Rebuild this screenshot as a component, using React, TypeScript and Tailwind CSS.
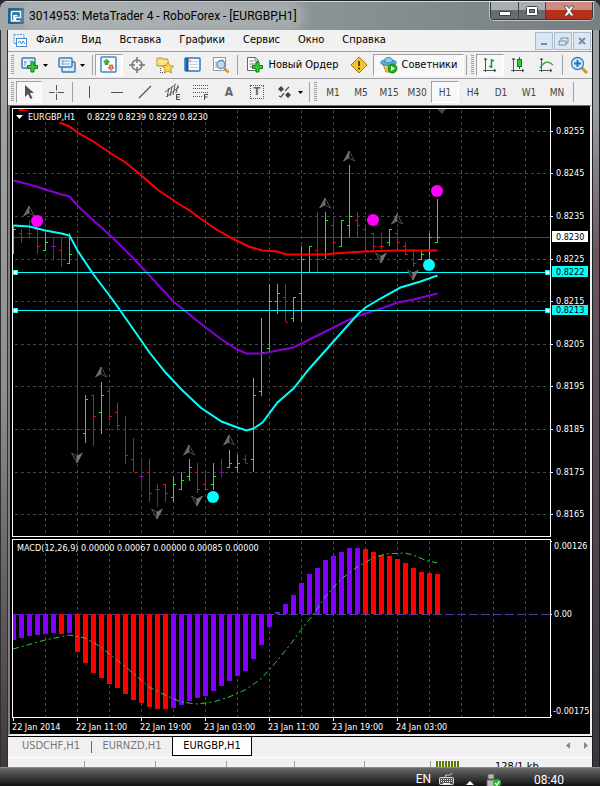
import { useState } from 'react';
import type { ReactNode } from 'react';

type Bar = [x: number, high: number, low: number, open: number, close: number, color: 'g' | 'r' | 'p'];

const BAR_COLORS = { g: '#00ff00', r: '#ff0000', p: '#8a00d4' };

const bars: Bar[] = [
  [13, 225, 254, 0, 229, 'g'], [21, 229, 243, 233, 237, 'r'], [29, 220, 237, 233, 233, 'p'],
  [37, 229, 254, 229, 246, 'r'], [45, 233, 251, 250, 242, 'g'], [53, 237, 259, 246, 246, 'p'],
  [61, 237, 267, 250, 259, 'r'], [69, 233, 263, 263, 254, 'g'], [77, 237, 451, 259, 429, 'r'],
  [85, 395, 443, 433, 399, 'g'], [93, 395, 446, 395, 416, 'r'], [101, 382, 434, 412, 395, 'g'],
  [109, 386, 421, 391, 416, 'r'], [117, 403, 430, 412, 425, 'r'], [125, 416, 464, 429, 455, 'r'],
  [133, 438, 472, 459, 472, 'r'], [141, 459, 490, 476, 476, 'p'], [149, 459, 502, 472, 493, 'r'],
  [157, 484, 507, 489, 489, 'p'], [165, 484, 502, 484, 493, 'r'], [173, 476, 502, 497, 484, 'g'],
  [181, 472, 490, 489, 480, 'g'], [189, 459, 481, 476, 467, 'g'], [197, 463, 493, 472, 489, 'r'],
  [205, 472, 490, 484, 489, 'r'], [213, 463, 490, 484, 476, 'g'], [221, 459, 477, 472, 472, 'p'],
  [229, 450, 467, 467, 463, 'g'], [237, 455, 472, 467, 463, 'g'], [245, 455, 463, 459, 463, 'r'],
  [253, 378, 472, 459, 395, 'g'], [261, 318, 396, 391, 352, 'g'], [269, 284, 352, 348, 301, 'g'],
  [277, 284, 314, 301, 293, 'g'], [285, 284, 322, 297, 322, 'r'], [293, 297, 322, 318, 297, 'g'],
  [301, 246, 322, 293, 259, 'g'], [309, 246, 272, 0, 246, 'g'], [317, 212, 272, 250, 259, 'r'],
  [325, 212, 259, 254, 220, 'g'], [333, 216, 254, 225, 242, 'r'], [341, 220, 246, 246, 220, 'g'],
  [349, 165, 237, 225, 216, 'g'], [357, 212, 237, 220, 225, 'r'], [365, 225, 250, 229, 250, 'r'],
  [373, 233, 250, 233, 246, 'r'], [381, 233, 250, 246, 246, 'r'], [389, 229, 246, 242, 229, 'g'],
  [397, 229, 248, 233, 242, 'r'], [405, 242, 255, 246, 254, 'r'], [413, 250, 267, 259, 263, 'r'],
  [421, 250, 259, 259, 254, 'g'], [429, 233, 264, 250, 237, 'g'], [437, 199, 242, 242, 237, 'g'],
];

// one value per bar, the end of the column that is away from the zero line
const ZERO_Y = 614;
const macd = [
  640, 638, 636, 635, 634, 633, 634, 633, 652, 663, 673, 678, 684, 688, 694, 700, 703, 707, 709, 709,
  708, 705, 701, 698, 696, 691, 686, 681, 676, 671, 659, 645, 627, 612, 604, 595, 583, 574, 568, 560,
  556, 552, 548, 548, 549, 552, 555, 556, 559, 563, 568, 572, 573, 574,
];

const isRedColumn = (i: number) => i === 6 || (i >= 8 && i <= 19) || i >= 44;

const redLine = '59,122 69,126 77,132 93,141 109,152 125,162 141,175 157,189 173,200 189,210 200,218 216,229 232,238 248,246 262,250 277,251 286,254 325,254 333,253 365,251 397,250 437,250';
const purpleLine = '13,180 29,184 45,189 61,194 69,196 77,205 93,220 101,227 117,242 133,258 149,275 173,301 200,323 221,339 237,349 246,353 262,353 277,350 293,347 309,339 333,327 349,319 365,313 381,308 397,302 413,299 437,293';
const cyanLine = '13,225 29,226 45,230 61,233 69,235 77,250 93,274 112,299 133,329 149,352 165,372 181,389 200,407 221,421 237,427 246,430 253,428 262,422 277,402 293,388 309,368 325,350 341,332 357,314 365,307 380,298 400,287 420,281 437,275';
const signalLine = '13,649 45,640 69,635 85,638 101,647 117,660 133,673 149,687 165,695 181,702 197,704 213,702 229,697 245,690 261,679 277,661 293,641 301,630 313,615 325,597 340,580 357,567 373,558 385,554 405,553 413,555 425,560 437,563';

const gridX = [45, 77, 109, 141, 173, 205, 237, 269, 301, 333, 365, 397, 429, 461, 493, 525];

const prices = [
  { y: 131, label: '0.8255' },
  { y: 173, label: '0.8245' },
  { y: 216, label: '0.8235' },
  { y: 259, label: '0.8225' },
  { y: 301, label: '0.8215' },
  { y: 344, label: '0.8205' },
  { y: 386, label: '0.8195' },
  { y: 429, label: '0.8185' },
  { y: 472, label: '0.8175' },
  { y: 514, label: '0.8165' },
];

const dates = ['22 Jan 2014', '22 Jan 11:00', '22 Jan 19:00', '23 Jan 03:00', '23 Jan 11:00', '23 Jan 19:00', '24 Jan 03:00'];

const fractalsUp = [[29, 211], [101, 372], [189, 450], [229, 440], [325, 203], [349, 156], [397, 219]];
const fractalsDown = [[77, 458], [157, 514], [197, 501], [381, 258], [413, 275]];

const Fractal = ({ x, y, down }: { x: number; y: number; down?: boolean }) => (
  <g transform={`translate(${x} ${y}) scale(1 ${down ? -1 : 1})`}>
    <path d="M0 -5 L-5.500 5 L0 2 Z" fill={down ? '#111' : '#666'} stroke="#76808a" strokeWidth="0.6" />
    <path d="M0 -5 L5.500 5 L0 2 Z" fill={down ? '#777' : '#000'} stroke="#8f7b6a" strokeWidth="0.6" />
  </g>
);

const Chart = () => (
  <svg viewBox="10 106 580 628" className="block w-full h-auto bg-black font-['DejaVu_Sans_Condensed','DejaVu_Sans',sans-serif]" role="img" aria-label="EURGBP,H1">
    {/* grid */}
    <g transform="translate(.5 .5)" strokeDasharray="3 3" shapeRendering="crispEdges">
      {gridX.map((x) => <path key={x} d={`M${x} 109V536`} stroke="#3c474f" />)}
      {gridX.map((x) => <path key={x} d={`M${x} 540V717`} stroke="#484848" />)}
      {prices.map((p) => <path key={p.y} d={`M14 ${p.y}H550`} stroke="#3c474f" />)}
    </g>
    <path d="M13 237.500H550" stroke="#3f4a53" />
    <path d="M437 109h9l-4 5z" fill="#3c474f" />

    {/* MACD columns */}
    <g shapeRendering="crispEdges">
      <path d="M13 614.500H550" stroke="#4a3fa0" strokeDasharray="9 3" />
      {macd.map((v, i) => (
        <rect
          key={i}
          x={i === 0 ? 13 : 11 + i * 8}
          y={Math.min(v, ZERO_Y)}
          width={i === 0 ? 3 : 5}
          height={Math.abs(v - ZERO_Y)}
          fill={isRedColumn(i) ? '#ff0000' : '#7f00ff'}
        />
      ))}
    </g>
    <polyline points={signalLine} fill="none" stroke="#32cd32" strokeDasharray="6 3 2 3" />

    {/* price bars */}
    <g transform="translate(.5 0)" shapeRendering="crispEdges">
      {bars.map(([x, high, low, open, close, c]) => (
        <path
          key={x}
          stroke={BAR_COLORS[c]}
          fill="none"
          d={`M${x} ${high}V${low}` + (open ? `M${x} ${open + 0.5}h-2.500` : '') + `M${x} ${close + 0.5}h2.500`}
        />
      ))}
    </g>

    {/* moving averages */}
    <g fill="none" strokeWidth="2" transform="translate(.5 .5)">
      <path d="M18 109L28 111" stroke="#ff0000" />
      <polyline points={redLine} stroke="#ff0000" />
      <polyline points={purpleLine} stroke="#8a00d4" />
      <polyline points={cyanLine} stroke="#00ffff" />
    </g>

    {[272, 310].map((y) => (
      <g key={y} shapeRendering="crispEdges">
        <path d={`M13 ${y + 0.5}H550`} stroke="#00ffff" />
        <rect x="13.500" y={y - 1.5} width="4" height="4" fill="#fff" stroke="#00ffff" />
        <rect x="545.500" y={y - 1.5} width="4" height="4" fill="#fff" stroke="#00ffff" />
      </g>
    ))}

    {fractalsUp.map(([x, y]) => <Fractal key={x} x={x} y={y} />)}
    {fractalsDown.map(([x, y]) => <Fractal key={x} x={x} y={y} down />)}

    <g fill="#ff00ff">
      <circle cx="37" cy="221" r="6" />
      <circle cx="373" cy="220" r="6" />
      <circle cx="437" cy="191" r="6" />
    </g>
    <g fill="#00ffff">
      <circle cx="429" cy="265" r="6" />
      <circle cx="213" cy="497" r="6" />
    </g>

    {/* frames and axis ticks */}
    <g fill="none" stroke="#fff" shapeRendering="crispEdges">
      <path d="M12.500 108.500H550.500V536.500H12.500Z" />
      <path d="M12.500 539.500H550.500V717.500H12.500Z" />
      {prices.map((p) => <path key={p.y} d={`M550 ${p.y + 0.5}h3`} />)}
      {[541, 614, 715].map((y) => <path key={y} d={`M550 ${y + 0.5}h2`} />)}
      {dates.map((d, i) => <path key={d} d={`M${13.5 + i * 64} 717v4`} />)}
    </g>

    <g fill="#fff" fontSize="9">
      <rect x="14" y="111" width="196" height="11" fill="#000" />
      <path d="M16 115h7l-3.500 4z" />
      <text x="28" y="120">EURGBP,H1</text>
      <text x="87" y="120">0.8229 0.8239 0.8229 0.8230</text>
      <text x="17" y="551">MACD(12,26,9) 0.00000 0.00067 0.00000 0.00085 0.00000</text>

      {prices.map((p) => <text key={p.y} x="556" y={p.y + 3}>{p.label}</text>)}
      <text x="554" y="549">0.00126</text>
      <text x="554" y="617">0.00</text>
      <text x="553" y="714">-0.00175</text>
      {dates.map((d, i) => <text key={d} x={12 + i * 64} y="730">{d}</text>)}

      <rect x="552" y="231" width="36" height="11" />
      <rect x="552" y="266" width="36" height="11" fill="#00ffff" />
      <rect x="552" y="305" width="36" height="10" fill="#00ffff" />
      <g fill="#000">
        <text x="556" y="240">0.8230</text>
        <text x="556" y="275">0.8222</text>
        <text x="556" y="313">0.8213</text>
      </g>
    </g>
  </svg>
);

const Icon = ({ children, w = 18, h = 18 }: { children: ReactNode; w?: number; h?: number }) => (
  <svg width={w} height={h} viewBox={`0 0 ${w} ${h}`} className="shrink-0" aria-hidden="true">{children}</svg>
);

const Caret = () => (
  <svg width="5" height="3" viewBox="0 0 5 3" className="shrink-0" aria-hidden="true"><path d="M0 0h5L2.500 3z" fill="#000" /></svg>
);

const Grip = () => (
  <div className="mx-[2px] h-5 w-[3px] shrink-0 bg-[repeating-linear-gradient(#a0a0a0_0_1px,transparent_1px_2px)]" />
);

const Separator = () => <div className="mx-[2px] h-5 w-px shrink-0 bg-[#a0a0a0]" />;

const ToolButton = ({ label, pressed, className = 'w-7', children }: { label: string; pressed?: boolean; className?: string; children: ReactNode }) => (
  <button
    aria-label={label}
    className={
      'flex h-[22px] shrink-0 items-center justify-center gap-1 border ' + className +
      (pressed ? ' border-t-[#a0a0a0] border-l-[#a0a0a0] border-r-white border-b-white bg-[#f8f8f8]' : ' border-transparent')
    }
  >
    {children}
  </button>
);

const PLUS = 'M10 6h3v3.500h3.500v3h-3.500V16h-3v-3.500H6.500v-3H10z';

const StandardToolbar = () => (
  <div className="flex h-[27px] items-center overflow-hidden border-b border-[#a0a0a0] bg-[#f0f0f0] pl-px">
    <Grip />
    <ToolButton label="Новый график" className="w-[37px]">
      <Icon>
        <rect x="1" y="2" width="13" height="10" rx="1" fill="#eaf4fc" stroke="#3c7ab4" strokeWidth="1.500" />
        <path d="M4 5v5M3 6h3M8 5h4" stroke="#7a9dbd" />
        <path d={PLUS} fill="#2fd02f" stroke="#0d7d12" />
      </Icon>
      <Caret />
    </ToolButton>
    <ToolButton label="Профили" className="w-[37px]">
      <Icon>
        <rect x="4" y="6" width="13" height="10" rx="1" fill="#dcebf8" stroke="#3c7ab4" strokeWidth="1.500" />
        <rect x="1" y="2" width="13" height="9" rx="1" fill="#eaf4fc" stroke="#3c7ab4" strokeWidth="1.500" />
        <path d="M3 5h9M3 8h9M5 4v5" stroke="#7aa6cd" />
      </Icon>
      <Caret />
    </ToolButton>
    <Separator />
    <ToolButton label="Обзор рынка" pressed>
      <Icon>
        <rect x="1" y="1" width="15" height="15" rx="1" fill="#fff" stroke="#3f86c8" strokeWidth="1.500" />
        <path d="M6.500 3l3 3H8v2.500H5V6H3.500z" fill="#2fc42f" stroke="#128a14" strokeWidth=".7" />
        <path d="M11 14.500l-3-3h1.500V9h3v2.500H14z" fill="#ff8a5c" stroke="#c73b12" strokeWidth=".7" />
      </Icon>
    </ToolButton>
    <ToolButton label="Окно данных">
      <Icon>
        <circle cx="9" cy="9" r="5" fill="none" stroke="#777" strokeWidth="1.500" />
        <path d="M9 1v6M9 11v6M1 9h6M11 9h6" stroke="#777" strokeWidth="1.500" />
      </Icon>
    </ToolButton>
    <ToolButton label="Навигатор">
      <Icon w={20}>
        <path d="M2 3q0-1 1-1h4l1 1h4q1 0 1 1v6H2z" fill="#f7de7a" stroke="#b8912a" />
        <path d="M2 6h11" stroke="#fff3b8" />
        <path d="M5.500 12v5M7 16.500h3" stroke="#555" strokeDasharray="1 1" />
        <path d="M13 6l1.800 3.700 4 .5-3 2.800.8 4-3.600-2-3.600 2 .8-4-3-2.800 4-.5z" fill="#fbd84c" stroke="#b5831d" strokeWidth=".8" />
      </Icon>
    </ToolButton>
    <ToolButton label="Терминал">
      <Icon>
        <rect x="1" y="2" width="15" height="13" rx="1" fill="#f5faff" stroke="#2f76b8" strokeWidth="1.500" />
        <path d="M3 2v13" stroke="#1f5e9e" strokeWidth="3" />
        <path d="M6 5.500h8M6 8.500h8M6 11.500h8" stroke="#c3d5e4" />
        <path d="M5 5h2" stroke="#e03030" />
      </Icon>
    </ToolButton>
    <ToolButton label="Тестер стратегий">
      <Icon>
        <rect x="1.500" y="1.500" width="12" height="13" fill="#fff" stroke="#999" />
        <path d="M4 12V5M7 13V8M11 7V3" stroke="#aaa" />
        <path d="M12 12l4.500 4.500" stroke="#d79a2b" strokeWidth="2.500" />
        <circle cx="9" cy="8.500" r="4" fill="#b9dcf5" stroke="#5d8fbd" strokeWidth="1.300" />
      </Icon>
    </ToolButton>
    <Separator />
    <ToolButton label="Новый Ордер" className="w-[105px]">
      <Icon>
        <path d="M1.500 1.500h8l3 3v10h-11z" fill="#fff" stroke="#666" />
        <path d="M9 1.500v3.500h3.500M3.500 5h4M3.500 8h6M3.500 11h4" fill="none" stroke="#777" />
        <path d={PLUS} fill="#2fd02f" stroke="#0d7d12" />
      </Icon>
      <span className="whitespace-nowrap">Новый Ордер</span>
    </ToolButton>
    <ToolButton label="Предупреждение">
      <Icon>
        <path d="M9 1l8 8-8 8-8-8z" fill="#f2c531" stroke="#a37a17" />
        <path d="M9 5v5M9 11.500v2" stroke="#5b4300" strokeWidth="2" />
      </Icon>
    </ToolButton>
    <ToolButton label="Советники" pressed className="w-[91px]">
      <Icon>
        <path d="M3 8l3 8h6l3-8z" fill="#f5d25a" stroke="#b88c22" />
        <ellipse cx="8.500" cy="6.500" rx="8" ry="3" fill="#5caee0" stroke="#2d76a8" strokeWidth=".8" />
        <path d="M4.500 6q0-5 4-4.500Q12.500 1 12.500 6q-4 2-8 0z" fill="#8bcbee" stroke="#2d76a8" strokeWidth=".8" />
        <circle cx="12.500" cy="12.500" r="4.500" fill="#21ad28" stroke="#0d7a12" strokeWidth=".8" />
        <path d="M11 10l4 2.500-4 2.500z" fill="#fff" />
      </Icon>
      <span>Советники</span>
    </ToolButton>
    <Separator />
    <Grip />
    <ToolButton label="Бары" pressed>
      <Icon>
        <path d="M4.500 2v14M2 14.500h13M3 4l1.500-2L6 4M13 13l2 1.500-2 1.500" fill="none" stroke="#555" />
        <path d="M10.500 3v9M10.500 4.500h2.500M8 10.500h2.500" stroke="#179a1c" strokeWidth="1.500" />
      </Icon>
    </ToolButton>
    <ToolButton label="Японские свечи">
      <Icon>
        <path d="M4.500 2v14M2 14.500h13M3 4l1.500-2L6 4M13 13l2 1.500-2 1.500" fill="none" stroke="#555" />
        <path d="M10.500 1v12" stroke="#0d7d12" />
        <rect x="8.500" y="3.500" width="4" height="7" fill="#2fd02f" stroke="#0d7d12" />
      </Icon>
    </ToolButton>
    <ToolButton label="Линия">
      <Icon>
        <path d="M4.500 2v14M2 14.500h13M3 4l1.500-2L6 4M13 13l2 1.500-2 1.500" fill="none" stroke="#555" />
        <path d="M3 12q6-10 13-3" fill="none" stroke="#3d9c40" strokeWidth="1.300" />
      </Icon>
    </ToolButton>
    <Separator />
    <ToolButton label="Увеличить">
      <Icon>
        <path d="M11 11l6 6" stroke="#c9982c" strokeWidth="3" />
        <circle cx="7.500" cy="7.500" r="6" fill="#cfe8fb" stroke="#3a7fc1" strokeWidth="1.300" />
        <path d="M7.500 4v7M4 7.500h7" stroke="#2d6fb3" strokeWidth="2" />
      </Icon>
    </ToolButton>
  </div>
);

const timeframes = ['M1', 'M5', 'M15', 'M30', 'H1', 'H4', 'D1', 'W1', 'MN'];

const DrawingToolbar = () => {
  const [frame, setFrame] = useState('H1');

  return (
    <div className="flex h-[26px] items-center overflow-hidden bg-[#f0f0f0] pl-px">
      <Grip />
      <ToolButton label="Курсор" pressed className="w-[26px]">
        <Icon><path d="M5 2v12l3-3 2.500 5 2-1-2.500-5h4z" fill="#555" /></Icon>
      </ToolButton>
      <ToolButton label="Перекрестие">
        <Icon><path d="M9.500 2v5.500M9.500 11v6M2 9.500h5.500M11 9.500h6" stroke="#555" /><path d="M9 9h1v1H9z" fill="#555" /></Icon>
      </ToolButton>
      <Separator />
      <ToolButton label="Вертикальная линия">
        <Icon><path d="M9.500 3v12" stroke="#555" /></Icon>
      </ToolButton>
      <ToolButton label="Горизонтальная линия">
        <Icon><path d="M3 9.500h12" stroke="#555" /></Icon>
      </ToolButton>
      <ToolButton label="Трендовая линия">
        <Icon><path d="M3 15L15 3" stroke="#555" strokeWidth="1.200" /></Icon>
      </ToolButton>
      <ToolButton label="Канал">
        <Icon>
          <path d="M1 9L12 1M2 14L15 4M5 5L3 14M8 4L6 13M11 3L9 12M14 2l-2 8" stroke="#555" fill="none" />
          <path d="M16 11.500h-3.500v5H16M12.500 14H15.500" stroke="#444" fill="none" />
        </Icon>
      </ToolButton>
      <ToolButton label="Фибоначчи">
        <Icon>
          <path d="M1 2.500h15M1 5.500h15M1 9.500h15M1 13.500h9" stroke="#555" strokeDasharray="1 1" />
          <path d="M12.500 17v-5.500H16M12.500 14H15.500" stroke="#444" fill="none" />
        </Icon>
      </ToolButton>
      <ToolButton label="Текст">
        <span className="text-[12px] font-bold text-[#666]">A</span>
      </ToolButton>
      <ToolButton label="Метка">
        <span className="flex h-[14px] w-[14px] items-center justify-center border border-dotted border-[#555] text-[11px] font-bold text-[#666]">T</span>
      </ToolButton>
      <ToolButton label="Стрелки" className="w-9">
        <Icon>
          <path d="M5 3l3 3-3 3-3-3zM12 9l3 3-3 3-3-3z" fill="#444" />
          <path d="M3 13l2 1 3-4M9 8l4-4" stroke="#555" strokeWidth="1.300" fill="none" />
        </Icon>
        <Caret />
      </ToolButton>
      <Separator />
      <Grip />
      {timeframes.map((t) => (
        <button
          key={t}
          onClick={() => setFrame(t)}
          className={
            'h-[22px] w-7 shrink-0 border text-[10px] text-[#444] ' +
            (t === frame ? 'border-t-[#a0a0a0] border-l-[#a0a0a0] border-r-white border-b-white bg-[#f8f8f8]' : 'border-transparent')
          }
        >
          {t}
        </button>
      ))}
      <Separator />
    </div>
  );
};

const TitleBar = () => (
  <header className="flex h-[29px] items-start justify-between border-t border-[#cfd5d8] pl-2 pr-[7px]">
    <div className="flex h-7 items-center gap-[5px]">
      <svg width="16" height="16" viewBox="0 0 16 16" aria-hidden="true">
        <rect width="16" height="16" rx="1" fill="#1e6394" />
        <path d="M3.500 3.500h9v6h-5v3.500h5M3.500 3.500V13H6V7.500h3.500" fill="none" stroke="#fff" strokeWidth="1.500" />
      </svg>
      <h1 className="whitespace-nowrap rounded-full bg-[#b5babd]/60 font-[Roboto,'Noto_Sans',sans-serif] text-[12px] leading-4 text-black shadow-[0_0_8px_8px_rgba(181,186,189,0.6)]">
        3014953: MetaTrader 4 - RoboForex - [EURGBP,H1]
      </h1>
    </div>
    <div className="flex h-[18px] overflow-hidden rounded-b border border-t-0 border-[#33383b] shadow-[0_0_0_1px_rgba(255,255,255,0.5)]">
      <button aria-label="Свернуть" className="flex w-7 items-center justify-center border-r border-[#444] bg-linear-to-b from-[#a9aeb1] from-50% to-[#666c70] to-50%">
        <Icon w={12} h={12}><rect x=".5" y="6.500" width="11" height="4" fill="#fff" stroke="#444" /></Icon>
      </button>
      <button aria-label="Развернуть" className="flex w-[27px] items-center justify-center border-r border-[#444] bg-linear-to-b from-[#a9aeb1] from-50% to-[#666c70] to-50%">
        <Icon w={12} h={12}><rect x=".5" y="1.500" width="11" height="9" rx="1" fill="#fff" stroke="#444" /><rect x="3.500" y="4.500" width="5" height="3" fill="#777" stroke="#444" /></Icon>
      </button>
      <button aria-label="Закрыть" className="flex w-[46px] items-center justify-center bg-linear-to-b from-[#d08a80] from-50% to-[#b5301a] to-50%">
        <Icon w={12} h={12}><path d="M1 1h3l2 2.500L8 1h3L7.700 6l3.300 5H8L6 8.500 4 11H1l3.300-5z" fill="#fff" stroke="#444" strokeWidth=".8" /></Icon>
      </button>
    </div>
  </header>
);

const menus = ['Файл', 'Вид', 'Вставка', 'Графики', 'Сервис', 'Окно', 'Справка'];

const MenuBar = () => (
  <nav className="flex h-[22px] items-center border-b border-[#a0a0a0] bg-[#f1f1f1] pl-[5px] pr-px">
    <Icon w={14} h={16}>
      <rect x="1" y="1.500" width="10" height="9" fill="#e6f1fb" stroke="#5f9bd0" strokeDasharray="2 1" />
      <rect x="3.500" y="5.500" width="10" height="8" fill="#fff" stroke="#4a8ccb" />
      <path d="M5 10l2-2 1.500 3L10 8l2 3" fill="none" stroke="#4a8ccb" />
    </Icon>
    <div className="flex flex-1 gap-[18px] pl-[9px]">
      {menus.map((m) => <button key={m}>{m}</button>)}
    </div>
    <div className="flex gap-px">
      {['M4 10h6', 'M5 6V4h7v5h-2M3 7h7v4H3z', 'M4 4l6 6M10 4l-6 6'].map((d, i) => (
        <button key={d} aria-label={['Свернуть окно', 'Восстановить окно', 'Закрыть окно'][i]} className="flex h-[18px] w-[18px] items-center justify-center border border-[#a9bccd] bg-[#dbe8f3]">
          <Icon w={14} h={14}><path d={d} fill="none" stroke="#7b8b99" strokeWidth={i === 1 ? 1 : 2} /></Icon>
        </button>
      ))}
    </div>
  </nav>
);

const ChartTabs = () => {
  const [tab, setTab] = useState('EURGBP,H1');

  return (
    <div className="flex h-[21px] items-start border-t border-black bg-[#f0f0f0] pl-[3px] pr-1">
      {['USDCHF,H1', 'EURNZD,H1', 'EURGBP,H1'].map((t, i) => (
        <div key={t} className="flex items-center">
          {i === 1 && <div className="h-3 w-px bg-[#666]" />}
          <button
            onClick={() => setTab(t)}
            className={'h-[19px] w-20 ' + (t === tab ? 'border border-t-0 border-black bg-white text-black' : 'text-[#777]')}
          >
            {t}
          </button>
        </div>
      ))}
      <div className="ml-auto flex h-[18px] items-center gap-3">
        <button aria-label="Назад"><Icon w={5} h={8}><path d="M4 0v7L0 3.500z" fill="#888" /></Icon></button>
        <button aria-label="Вперед"><Icon w={5} h={8}><path d="M1 0v7l4-3.500z" fill="#888" /></Icon></button>
      </div>
    </div>
  );
};

// the bar is cut off by the taskbar, only the top of its text shows
const StatusBar = () => (
  <div className="flex h-[10px] items-start overflow-hidden border-t border-white bg-[#f0f0f0] pt-[3px]">
    <div className="h-2 w-[77px] border-r border-[#a0a0a0]" />
    <div className="h-2 w-[71px] border-r border-[#a0a0a0]" />
    <div className="h-2 w-[71px] border-r border-[#a0a0a0]" />
    <div className="h-2 w-[68px] border-r border-[#a0a0a0]" />
    <div className="h-2 w-[70px] border-r border-[#a0a0a0]" />
    <div className="h-2 w-[66px] border-r border-[#a0a0a0]" />
    <div className="ml-[5px] h-2 w-[23px] bg-[repeating-linear-gradient(90deg,#5a7a00_0_2px,transparent_2px_3px)]" />
    <span className="ml-9 whitespace-nowrap leading-3 text-black">128/1 kb</span>
  </div>
);

const Taskbar = () => (
  <footer className="flex h-[19px] items-start justify-end overflow-hidden border-t border-[#8a8a8a] bg-linear-to-b from-[#6b6b6b] to-[#141414] font-[Roboto,'Noto_Sans',sans-serif] text-[12px] text-white">
    <span className="mt-[5px] leading-3">EN</span>
    <span className="ml-2 mt-[5px]">
      <Icon w={15} h={13}>
        <path d="M6 4Q6 1 9 2t4-2" fill="none" stroke="#ccc" />
        <rect x=".5" y="4.500" width="14" height="7" rx="1" fill="#555" stroke="#ddd" />
        <path d="M2 6.500h11M2 8.500h11" stroke="#eee" strokeDasharray="1 1" />
        <path d="M4 10.500h7" stroke="#eee" />
      </Icon>
    </span>
    <button aria-label="Скрытые значки" className="ml-3 mt-3"><Icon w={8} h={5}><path d="M0 5l4-4 4 4z" fill="#fff" /></Icon></button>
    <span className="ml-3 mt-[6px]">
      <Icon w={16} h={12}>
        <path d="M2 0h6v5H2zM1 6h8v8H1z" fill="#bbb" stroke="#666" />
        <circle cx="11" cy="9" r="4" fill="#2cae2c" />
        <path d="M9 9l2 2 2.500-4" fill="none" stroke="#fff" strokeWidth="1.300" />
      </Icon>
    </span>
    <time className="ml-8 mr-9 mt-[6px] leading-3">08:40</time>
  </footer>
);

export default function App() {
  return (
    <div className="bg-[#2a2e32] font-['DejaVu_Sans_Condensed','DejaVu_Sans',sans-serif] text-[11px] text-black">
      <div className="overflow-hidden rounded-t-lg border-t border-[#22262a]">
        <div className="bg-linear-to-r from-[#a2a7aa] via-[#8b9497] to-[#767e82]">
          <TitleBar />
        </div>
        <div className="flex">
          <div className="w-2 shrink-0 border-x border-[#2d2f31] bg-linear-to-b from-[#a5a9ab] via-[#8d8d8d] to-[#42383c]" />
          <main className="min-w-0 flex-1">
            <MenuBar />
            <StandardToolbar />
            <DrawingToolbar />
            <div className="border-x-2 border-t border-b-2 border-t-[#707070] border-l-[#808080] border-r-[#f0f0f0] border-b-[#f0f0f0]">
              <Chart />
            </div>
            <ChartTabs />
            <StatusBar />
          </main>
          <div className="w-2 shrink-0 border-x border-[#1c1e20] bg-linear-to-b from-[#98a1a5] from-10% via-[#6d5560] via-30% to-[#3a3640]" />
        </div>
      </div>
      <Taskbar />
    </div>
  );
}
